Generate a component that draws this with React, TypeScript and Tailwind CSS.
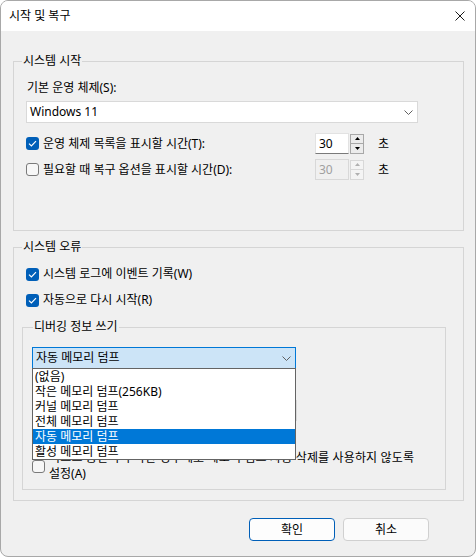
import React from "react";

function Check({ checked }: { checked: boolean }) {
  if (checked) {
    return (
      <span className="w-[13px] h-[13px] rounded-[3px] bg-[#005fb8] flex items-center justify-center shrink-0">
        <svg width="9" height="7" viewBox="0 0 9 7">
          <path d="M1 3.6 L3.4 6 L8 1.2" fill="none" stroke="white" strokeWidth="1.2" />
        </svg>
      </span>
    );
  }
  return <span className="w-[13px] h-[13px] rounded-[3px] border border-[#7a7a7a] bg-[#f7f7f7] shrink-0" />;
}

function Chevron() {
  return (
    <svg width="9" height="5" viewBox="0 0 9 5">
      <path d="M0.5 0.5 L4.5 4.5 L8.5 0.5" fill="none" stroke="#606060" strokeWidth="1" />
    </svg>
  );
}

function Spin({ disabled }: { disabled: boolean }) {
  return (
    <div className="flex items-center">
      <div
        className={
          disabled
            ? "w-[34px] h-[21px] border border-[#d8d8d8] bg-[#f0f0f0] text-[#a0a0a0] pl-[3px] flex items-center"
            : "w-[34px] h-[21px] border border-[#e2e2e2] border-b-[#7a7a7a] bg-white text-black pl-[3px] flex items-center"
        }
      >
        30
      </div>
      <div
        className={
          disabled
            ? "ml-[1px] w-[14px] h-[20px] flex flex-col border border-[#d8d8d8]"
            : "ml-[1px] w-[14px] h-[20px] flex flex-col border border-[#a8a8a8]"
        }
      >
        <div
          className={
            disabled
              ? "flex-1 flex items-center justify-center bg-[#f4f4f4] border-b border-[#d8d8d8]"
              : "flex-1 flex items-center justify-center bg-[#ececec] border-b border-[#a8a8a8]"
          }
        >
          <svg width="5" height="3" viewBox="0 0 5 3">
            <path d="M0 3 L2.5 0 L5 3 Z" fill={disabled ? "#b0b0b0" : "#000"} />
          </svg>
        </div>
        <div
          className={
            disabled
              ? "flex-1 flex items-center justify-center bg-[#f4f4f4]"
              : "flex-1 flex items-center justify-center bg-[#ececec]"
          }
        >
          <svg width="5" height="3" viewBox="0 0 5 3">
            <path d="M0 0 L2.5 3 L5 0 Z" fill={disabled ? "#b0b0b0" : "#000"} />
          </svg>
        </div>
      </div>
      <span className="ml-[14px]">초</span>
    </div>
  );
}

const listItems = ["(없음)", "작은 메모리 덤프(256KB)", "커널 메모리 덤프", "전체 메모리 덤프", "자동 메모리 덤프", "활성 메모리 덤프"];

export default function App() {
  return (
    <div className="w-[476px] h-[557px] border border-[#a8a8a8] rounded-[8px] overflow-hidden bg-[#f0f0f0] text-[12px] leading-[16px] text-black font-['Noto_Sans','Noto_Sans_CJK_KR',sans-serif]">
      <div className="h-[30px] bg-white flex items-center justify-between pl-[8px] pr-[10px]">
        <span>시작 및 복구</span>
        <svg width="10" height="10" viewBox="0 0 10 10">
          <path d="M0.5 0.5 L9.5 9.5 M9.5 0.5 L0.5 9.5" stroke="#1a1a1a" strokeWidth="1" />
        </svg>
      </div>
      <div className="pl-[12px]">
        {/* Group 1 */}
        <div className="relative mt-[30px] w-[451px] h-[170px] border border-[#d5d5d5] pl-[12px] pt-[18px]">
          <span className="absolute -top-[9px] left-[8px] px-[1px] bg-[#f0f0f0]">시스템 시작</span>
          <div className="pl-[1px]">기본 운영 체제(S):</div>
          <div className="mt-[5px] w-[392px] h-[22px] bg-white border border-[#d9d9d9] flex items-center justify-between pl-[3px] pr-[4px]">
            <span>Windows 11</span>
            <Chevron />
          </div>
          <div className="mt-[10px] h-[21px] flex items-center">
            <div className="w-[289px] flex items-center">
              <Check checked={true} />
              <span className="ml-[4px]">운영 체제 목록을 표시할 시간(T):</span>
            </div>
            <Spin disabled={false} />
          </div>
          <div className="mt-[5px] h-[21px] flex items-center">
            <div className="w-[289px] flex items-center">
              <Check checked={false} />
              <span className="ml-[4px]">필요할 때 복구 옵션을 표시할 시간(D):</span>
            </div>
            <Spin disabled={true} />
          </div>
        </div>

        {/* Group 2 */}
        <div className="relative mt-[16px] w-[451px] h-[254px] border border-[#d5d5d5] pl-[12px] pt-[18px]">
          <span className="absolute -top-[9px] left-[8px] px-[1px] bg-[#f0f0f0]">시스템 오류</span>
          <div className="h-[16px] flex items-center">
            <Check checked={true} />
            <span className="ml-[4px]">시스템 로그에 이벤트 기록(W)</span>
          </div>
          <div className="mt-[10px] h-[16px] flex items-center">
            <Check checked={true} />
            <span className="ml-[4px]">자동으로 다시 시작(R)</span>
          </div>

          {/* Inner group */}
          <div className="relative mt-[19px] -ml-[4px] w-[424px] h-[163px] border border-[#d5d5d5] pl-[9px] pt-[19px]">
            <span className="absolute -top-[9px] left-[10px] px-[1px] bg-[#f0f0f0]">디버깅 정보 쓰기</span>
            <div className="relative w-[264px] h-[22px]">
              <div className="h-[22px] bg-[#cce4f7] border border-[#0078d7] flex items-center justify-between pl-[3px] pr-[4px]">
                <span>자동 메모리 덤프</span>
                <Chevron />
              </div>
              <div className="absolute left-0 top-[21px] w-[264px] z-10 bg-white border border-[#646464]">
                {listItems.map((t) => (
                  <div
                    key={t}
                    className={
                      t === "자동 메모리 덤프"
                        ? "h-[15px] leading-[15px] pl-[2px] bg-[#0078d7] text-white whitespace-nowrap"
                        : "h-[15px] leading-[15px] pl-[2px] whitespace-nowrap"
                    }
                  >
                    {t}
                  </div>
                ))}
              </div>
            </div>
            {/* area hidden under the open list */}
            <div className="mt-[31px] w-[265px] h-[21px] bg-white border border-[#d9d9d9]" />
            <div className="mt-[7px] h-[16px]" />
            <div className="mt-[6px] flex items-center">
              <Check checked={false} />
              <div className="ml-[4px] whitespace-nowrap">
                <div className="tracking-[0.15px]">디스크 공간이 부족한 경우에도 메모리 덤프 자동 삭제를 사용하지 않도록</div>
                <div>설정(A)</div>
              </div>
            </div>
          </div>
        </div>

        {/* Buttons */}
        <div className="mt-[17px] pl-[236px] flex gap-[8px]">
          <button className="w-[86px] h-[23px] rounded-[4px] border border-[#005fb8] bg-[#fdfdfd] flex items-center justify-center">
            확인
          </button>
          <button className="w-[86px] h-[23px] rounded-[4px] border border-[#d0d0d0] bg-[#fbfbfb] flex items-center justify-center">
            취소
          </button>
        </div>
      </div>
    </div>
  );
}
